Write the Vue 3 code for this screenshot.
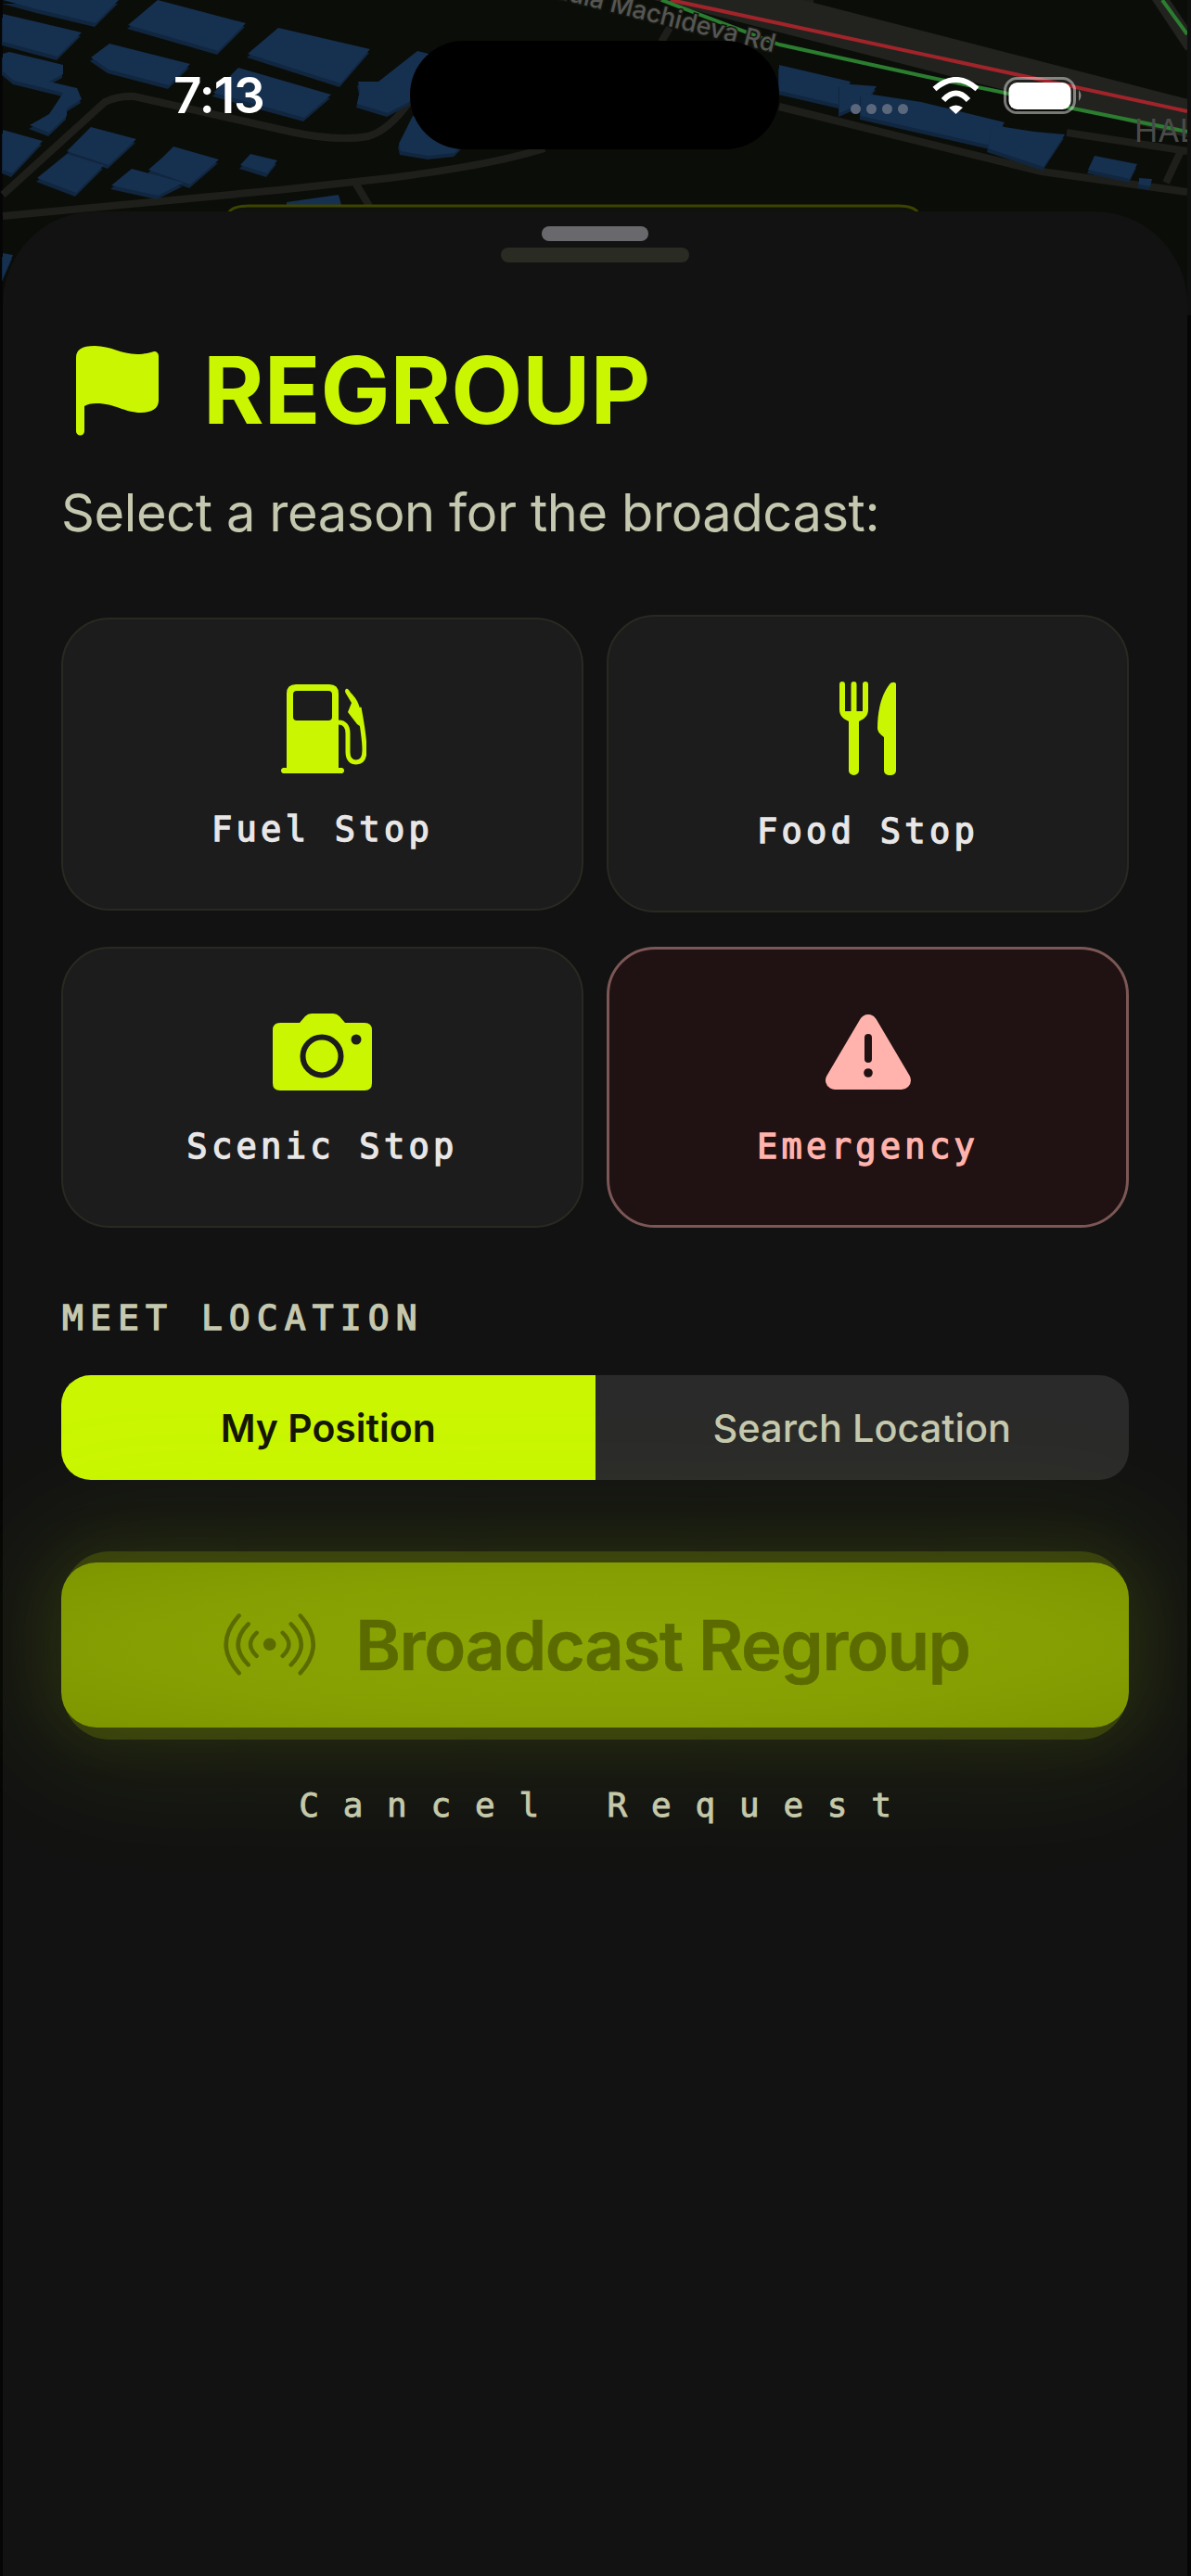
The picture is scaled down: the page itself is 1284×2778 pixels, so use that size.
<script setup>
const buildings = [
  '3,0 128,0 103,25 40,10 3,0',
  '3,15 88,35 62,61 3,45',
  '170,0 265,25 235,55 138,27',
  '118,47 205,69 182,92 117,75 98,62',
  '300,30 399,53 367,90 267,58',
  '257,73 357,102 328,127 230,100',
  '450,55 470,60 470,70 441,110 418,122 385,112 388,98 386,88 408,88',
  '10,56 48,65 68,70 68,80 53,88 83,95 88,107 72,117 72,125 53,143 32,135 53,123 63,108 68,100 15,87 3,77 3,58',
  '3,140 46,152 13,187 3,183',
  '98,137 147,150 117,178 72,163',
  '72,166 112,178 82,208 40,192',
  '187,158 236,172 205,199 160,183 175,170',
  '142,182 198,197 170,211 120,200',
  '270,166 299,173 288,187 259,178',
  '309,218 365,210 369,225 309,225',
  '430,155 432,163 462,168 490,165 515,140 445,125',
  '840,70 917,88 905,113 840,98',
  '905,90 945,93 933,110 905,122',
  '928,100 993,110 1083,132 1068,157 928,125',
  '1070,135 1115,142 1148,145 1125,180 1065,160',
  '1180,168 1226,177 1218,193 1173,183',
  '1228,192 1242,193 1240,201 1228,199',
  '3,273 14,275 3,300'
]
</script>

<template>
  <div class="page">
    <svg class="map" width="1284" height="340" viewBox="0 0 1284 340">
      <rect x="3" width="1277" height="340" fill="#0b0d09" />
      <g fill="none" stroke="#1e1f1a" stroke-width="8">
        <path d="M3,210 L113,110 Q127,103 145,104 L313,142 Q363,153 397,147 Q420,140 441,110" />
        <path d="M3,233 L300,205 L420,192 Q530,178 587,160" />
        <path d="M383,197 L398,222" />
        <path d="M840,115 L1123,185 L1280,207" />
        <path d="M1150,143 L1280,163" />
        <path d="M1273,163 L1257,197" />
        <path d="M722,30 L713,45" />
        <path d="M870,0 L870,10" stroke-width="14" stroke-linecap="round" />
      </g>
      <path d="M700,-22 L1290,130" fill="none" stroke="#22231f" stroke-width="40" />
      <path d="M1245,-10 L1285,50" fill="none" stroke="#22231f" stroke-width="16" />
      <g v-for="b in buildings" :key="b">
        <polygon :points="b" fill="#11263f" transform="translate(-1 4)" />
        <polygon :points="b" fill="#16304f" />
      </g>
      <path d="M723,0 L1280,120" fill="none" stroke="#a1242a" stroke-width="4" />
      <path d="M713,0 L840,48 L1000,83 L1083,100 L1157,117 L1280,142" fill="none" stroke="#2b7d2f" stroke-width="4" />
      <path d="M1253,0 L1280,37" fill="none" stroke="#2b7d2f" stroke-width="4" />
      <text class="road-name" transform="translate(596 -3) rotate(14)">dula Machideva Rd</text>
      <text class="area-name" x="1223" y="153">HAL</text>
      <path d="M245,232 Q248,222 268,222 L968,222 Q988,222 991,232" fill="#10130c" stroke="#3c4400" stroke-width="3" />
      <rect x="1280" width="4" height="340" fill="#101010" />
    </svg>

    <div class="island"></div>

    <div class="status">
      <span class="time">7:13</span>
      <div class="status-right">
        <div class="cell-dots"><i></i><i></i><i></i><i></i></div>
        <svg width="53" height="40" viewBox="0 0 53 40">
          <path d="M3.5,13 Q26.5,-7 49.5,13" fill="none" stroke="#fff" stroke-width="6" />
          <path d="M13,25 Q26.5,10 40,25" fill="none" stroke="#fff" stroke-width="6" />
          <path d="M19,33 Q26.5,28 34,33 L26.5,40 Z" fill="#fff" />
        </svg>
        <svg width="86" height="40" viewBox="0 0 86 40">
          <rect x="1.5" y="1.5" width="75" height="37" rx="13" fill="none" stroke="#fff" stroke-opacity=".45" stroke-width="3" />
          <rect x="5.5" y="6" width="67" height="29" rx="9" fill="#fff" />
          <path d="M81,14 Q86,20 81,26 Z" fill="#fff" fill-opacity=".45" />
        </svg>
      </div>
    </div>

    <main class="sheet">
      <div class="grabber"></div>
      <div class="grabber-sub"></div>

      <header class="head">
        <svg class="flag" width="89" height="98" viewBox="0 0 89 98">
          <path d="M0,14 C0,5 6,1 20,1 C38,1 48,10 66,10 C74,10 80,8 84,7 C87,7 89,9 89,12 L89,60 C89,68 82,73 70,73 C52,73 42,63 22,63 C16,63 12,64 9,66 L9,93 A4.5,4.5 0 0 1 0,93 Z" fill="#c9f600" />
        </svg>
        <h1 class="title">REGROUP</h1>
      </header>
      <p class="subtitle">Select a reason for the broadcast:</p>

      <section class="grid">
        <button class="card">
          <svg width="94" height="96" viewBox="23 17 94 96">
            <path fill-rule="evenodd" d="M41,17 L77,17 Q87,17 87,27 L87,107 L91,107 A3.2,3.2 0 0 1 91,113 L27,113 A3.2,3.2 0 0 1 27,107 L31,107 L31,27 Q31,17 41,17 Z M42,24 Q38,24 38,28 L38,52 Q38,56 42,56 L76,56 Q80,56 80,52 L80,28 Q80,24 76,24 Z" fill="#c9f600" />
            <path d="M87,58 C94,58 97,63 97,70 L97,90 C97,98 101,101 106,101 C112,101 115,97 115,88 C115,75 112,58 109,42" fill="none" stroke="#c9f600" stroke-width="5" />
            <path d="M95,22 C97,21 98,23 100,26 C105,31 108,35 110,43 L113,64 L107,60 L97,47 L101,37 L95,27 Q93,24 95,22 Z" fill="#c9f600" />
          </svg>
          <span class="label">Fuel Stop</span>
        </button>
        <button class="card">
          <svg width="61" height="101" viewBox="0 0 61 101">
            <path d="M0,3 A3,3 0 0 1 6,3 L6,32 L12.5,32 L12.5,3 A3,3 0 0 1 18.5,3 L18.5,32 L25,32 L25,3 A3,3 0 0 1 31,3 L31,30 C31,37 27,40 21,43 L21,96 A5.5,5 0 0 1 10,96 L10,43 C4,40 0,37 0,30 Z" fill="#c9f600" />
            <path d="M61,3 C61,0 56,0 54,3 C46,13 41,30 41,50 C41,54 44,57 48,60 L48,96 A5,5 0 0 0 53,101 L56,101 A5,5 0 0 0 61,96 Z" fill="#c9f600" />
          </svg>
          <span class="label">Food Stop</span>
        </button>
        <button class="card">
          <svg width="107" height="83" viewBox="0 0 107 83">
            <path d="M8,10 L29,10 L35,3 Q38,0 42,0 L65,0 Q69,0 72,3 L78,10 L99,10 Q107,10 107,18 L107,75 Q107,83 99,83 L8,83 Q0,83 0,75 L0,18 Q0,10 8,10 Z" fill="#c9f600" />
            <circle cx="53" cy="46" r="20.5" fill="none" stroke="#1c1c1c" stroke-width="6" />
            <circle cx="90" cy="28" r="5.5" fill="#1c1c1c" />
          </svg>
          <span class="label">Scenic Stop</span>
        </button>
        <button class="card danger">
          <svg width="92" height="83" viewBox="0 0 92 83">
            <polygon points="46,11 10,72 82,72" fill="#ffb3ac" stroke="#ffb3ac" stroke-width="20" stroke-linejoin="round" />
            <path d="M46,26 L46,49" stroke="#201112" stroke-width="8" stroke-linecap="round" />
            <circle cx="46" cy="64" r="4.8" fill="#201112" />
          </svg>
          <span class="label">Emergency</span>
        </button>
      </section>

      <h2 class="section-title">MEET LOCATION</h2>

      <div class="segment">
        <button class="seg active">My Position</button>
        <button class="seg">Search Location</button>
      </div>

      <button class="cta">
        <svg width="102" height="72" viewBox="0 0 102 72">
          <circle cx="50.7" cy="35.3" r="6.8" fill="#5c6b00" />
          <g fill="none" stroke="#5c6b00" stroke-width="4.5" stroke-linecap="round">
            <path d="M36.7,22.8 Q23.3,35.3 36.7,47.8" />
            <path d="M27.7,13.3 Q5.7,35.3 27.7,57.3" />
            <path d="M17.7,4.3 Q-10.3,35.3 17.7,66.3" />
            <path d="M64.7,22.8 Q78.1,35.3 64.7,47.8" />
            <path d="M73.7,13.3 Q95.7,35.3 73.7,57.3" />
            <path d="M83.7,4.3 Q111.7,35.3 83.7,66.3" />
          </g>
        </svg>
        <span>Broadcast Regroup</span>
      </button>

      <button class="cancel">Cancel Request</button>
    </main>
  </div>
</template>

<style scoped>
.page {
  position: relative;
  width: 1284px;
  height: 2778px;
  overflow: hidden;
  background: #050505;
  font-family: Inter, "Liberation Sans", sans-serif;
}
.map {
  position: absolute;
  top: 0;
  left: 0;
  display: block;
}
.road-name {
  font-family: Inter, sans-serif;
  font-size: 27px;
  font-weight: 500;
  fill: #555654;
  paint-order: stroke;
  stroke: #15160f;
  stroke-width: 3px;
}
.area-name {
  font-family: Inter, sans-serif;
  font-size: 34px;
  fill: #4a4b49;
}
.island {
  position: absolute;
  left: 442px;
  top: 44px;
  width: 398px;
  height: 117px;
  border-radius: 58px;
  background: #000;
}
.status {
  position: absolute;
  top: 83px;
  left: 187px;
  right: 116px;
  height: 40px;
  display: flex;
  align-items: center;
  justify-content: space-between;
  color: #fff;
}
.time {
  font-size: 53px;
  font-weight: 600;
  line-height: 40px;
  letter-spacing: -1px;
}
.status-right {
  display: flex;
  align-items: center;
  gap: 25px;
}
.cell-dots {
  display: flex;
  gap: 6px;
  margin-top: 28px;
}
.cell-dots i {
  display: block;
  width: 11px;
  height: 11px;
  border-radius: 50%;
  background: #5b677a;
}
.sheet {
  position: relative;
  isolation: isolate;
  margin: 228px 4px 0 3px;
  height: 2550px;
  box-sizing: border-box;
  padding: 16px 63px 0 63px;
  background: #121212;
  border-radius: 100px 100px 0 0;
  display: flex;
  flex-direction: column;
}
.grabber {
  align-self: center;
  width: 115px;
  height: 16px;
  border-radius: 8px;
  background: #69696d;
}
.grabber-sub {
  align-self: center;
  width: 203px;
  height: 16px;
  margin-top: 7px;
  border-radius: 8px;
  background: #2a2b22;
}
.head {
  display: flex;
  align-items: flex-start;
  gap: 48px;
  margin: 89px 0 0 16px;
}
.flag {
  flex: none;
  display: block;
}
.title {
  margin: 0;
  font-size: 100px;
  font-weight: 700;
  line-height: 98px;
  color: #c9f600;
}
.subtitle {
  margin: 49px 0 0;
  font-size: 56px;
  line-height: 68px;
  font-weight: 400;
  letter-spacing: -0.42px;
  color: #c5c8ae;
}
.grid {
  display: grid;
  grid-template-columns: 563px 563px;
  column-gap: 25px;
  row-gap: 37px;
  align-items: center;
  margin-top: 76px;
}
.card {
  display: flex;
  flex-direction: column;
  align-items: center;
  gap: 43px;
  box-sizing: border-box;
  padding: 70px 0 67px;
  border: 2px solid #282a22;
  border-radius: 52px;
  background: #1c1c1c;
  color: #e8e6e6;
}
.card svg {
  display: block;
}
.label {
  font-family: "DejaVu Sans Mono", monospace;
  font-size: 37px;
  font-weight: 400;
  -webkit-text-stroke: 1.4px currentColor;
  line-height: 36px;
  letter-spacing: 4.3px;
}
.danger {
  padding: 69px 0 66px;
  background: #201112;
  border: 3px solid #7b5755;
  color: #ffb3ac;
}
.section-title {
  margin: 79px 0 0;
  padding-left: 1px;
  font-family: "DejaVu Sans Mono", monospace;
  font-size: 38px;
  font-weight: 400;
  -webkit-text-stroke: 1.4px currentColor;
  line-height: 36px;
  letter-spacing: 7.1px;
  color: #c5c8ae;
}
.segment {
  display: grid;
  grid-template-columns: 1fr 1fr;
  height: 113px;
  margin-top: 44px;
  border-radius: 32px;
  overflow: hidden;
  background: #2a2a2a;
}
.seg {
  border: 0;
  background: transparent;
  font-family: Inter, sans-serif;
  font-size: 41.5px;
  font-weight: 500;
  color: #c5c8ae;
}
.seg.active {
  background: #c9f600;
  color: #141600;
  font-size: 41px;
  font-weight: 600;
}
.cta {
  position: relative;
  display: flex;
  align-items: center;
  justify-content: center;
  gap: 41px;
  height: 178px;
  margin-top: 89px;
  padding: 0 0 0 3px;
  border: 0;
  border-radius: 38px;
  background: radial-gradient(ellipse at center, #8ba605 0%, #869f02 60%, #7d9600 100%);
  box-shadow: 0 0 70px 12px rgba(202, 248, 0, 0.07), 0 0 150px 50px rgba(202, 248, 0, 0.07);
  color: #5c6b00;
  font-family: Inter, sans-serif;
  font-size: 74px;
  font-weight: 600;
  -webkit-text-stroke: 0.6px currentColor;
  letter-spacing: -1.3px;
}
.cta::before {
  content: "";
  position: absolute;
  z-index: -1;
  top: -12px;
  bottom: -13px;
  left: 2px;
  right: 2px;
  border-radius: 50px;
  background: #30350e;
}
.cta svg {
  flex: none;
  display: block;
}
.cancel {
  align-self: center;
  margin-top: 64px;
  margin-right: -26px;
  padding: 0;
  border: 0;
  background: none;
  font-family: "DejaVu Sans Mono", monospace;
  font-size: 36px;
  font-weight: 400;
  -webkit-text-stroke: 0.9px currentColor;
  line-height: 40px;
  letter-spacing: 25.8px;
  color: #c5c8ae;
}
</style>
